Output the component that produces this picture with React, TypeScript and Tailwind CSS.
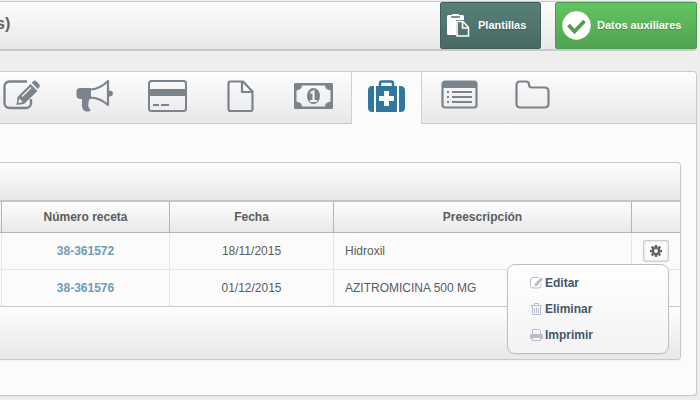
import type { ReactNode } from "react";

type Tab = { label: string; icon: ReactNode; active?: boolean };

const tabs: Tab[] = [
  {
    label: "Notas",
    icon: (
      <>
        <path d="M25 3.500H7.500a5 5 0 0 0-5 5V25a5 5 0 0 0 5 5H24a5 5 0 0 0 5-5v-4" fill="none" stroke="currentColor" strokeWidth="2.400" />
        <path d="M14.500 27l1-8L28.500 6l7 7L22 26z" fill="currentColor" />
        <path d="M29.800 4.700l1.700-1.700q1.500-1 3 .500l2.500 2.500q1.500 1.500.5 3l-1.700 2z" fill="currentColor" />
        <path d="M20 18.500l9-9" stroke="#f6f6f6" strokeWidth="1.200" />
        <path d="M17.300 20.500l3.500 3.500-4 1-.500-.500z" fill="#f6f6f6" />
      </>
    ),
  },
  {
    label: "Avisos",
    icon: (
      <>
        <path d="M16 10H5.500Q1.500 10 1.500 13v4q0 4 4 4H7c.5 3-.5 5 0 7.500.5 3.500 2.500 5 5 5 2 0 3.500-.5 3.500-1.500-3-3-2.500-7-1-11H16z" fill="currentColor" />
        <path d="M16 11.500c6-.5 12-3.500 17-8.500v24c-5-4.500-11-7-17-7.500" fill="none" stroke="currentColor" strokeWidth="2.200" strokeLinejoin="round" />
        <path d="M34 12.500q4 0 4 3t-4 3z" fill="currentColor" />
      </>
    ),
  },
  {
    label: "Pagos",
    icon: (
      <>
        <rect x="1" y="3" width="37" height="30" rx="2.500" fill="none" stroke="currentColor" strokeWidth="2" />
        <path d="M1 11h37v7H1zM5 26h6v2H5zM13 26h8v2h-8z" fill="currentColor" />
      </>
    ),
  },
  {
    label: "Documentos",
    icon: (
      <path d="M9.500 3.500H22l9.500 10V31q0 2-2 2h-20q-2 0-2-2V5.500q0-2 2-2zM21 4v10h10.500" fill="none" stroke="currentColor" strokeWidth="2.200" strokeLinejoin="round" />
    ),
  },
  {
    label: "Facturas",
    icon: (
      <>
        <path fillRule="evenodd" d="M1.500 5h36q1.500 0 1.500 1.500v23q0 1.500-1.500 1.500h-36Q0 31 0 29.500v-23Q0 5 1.500 5zM8 7.500q0 4-5.500 5v11q5.500 1 5.500 5h23q0-4 5.500-5v-11q-5.500-1-5.500-5z" fill="currentColor" />
        <ellipse cx="19.500" cy="18" rx="6.500" ry="8" fill="currentColor" />
        <path d="M16.500 15l3-1.500v9.500m-3.500 0h7" fill="none" stroke="#f2f2f2" strokeWidth="2.200" />
      </>
    ),
  },
  {
    label: "Recetas",
    active: true,
    icon: (
      <>
        <path fillRule="evenodd" d="M9 8h21v26H9zM17 13v5h-5v5h5v5h5v-5h5v-5h-5v-5z" fill="currentColor" />
        <path d="M7 8v26H5.500Q1 34 1 29.500v-17Q1 8 5.500 8zM32 8v26h1.500q4.500 0 4.500-4.500v-17Q38 8 33.500 8z" fill="currentColor" />
        <path d="M13 8.500V5.500q0-2 2-2h9q2 0 2 2v3" fill="none" stroke="currentColor" strokeWidth="2.500" />
      </>
    ),
  },
  {
    label: "Historial",
    icon: (
      <>
        <rect x="2.500" y="3.500" width="34" height="26" rx="2.500" fill="none" stroke="currentColor" strokeWidth="2.200" />
        <path d="M2 4h35v6H2zM7 13h2v2H7zM7 18h2v2H7zM7 23h2v2H7zM12 13h20v2H12zM12 18h20v2H12zM12 23h20v2H12z" fill="currentColor" />
      </>
    ),
  },
  {
    label: "Archivos",
    icon: (
      <path d="M7 3.500h6q3 0 3 3 0 3 3 3h12.500q4 0 4 4v12q0 4-4 4H7.500q-4 0-4-4V7.500q0-4 3.500-4z" fill="none" stroke="currentColor" strokeWidth="2.200" />
    ),
  },
];

const recetas = [
  { numero: "38-361572", fecha: "18/11/2015", texto: "Hidroxil" },
  { numero: "38-361576", fecha: "01/12/2015", texto: "AZITROMICINA 500 MG" },
];

const acciones: { label: string; icon: ReactNode }[] = [
  {
    label: "Editar",
    icon: (
      <>
        <path d="M9 .500H3Q.500.500.500 3v5.500q0 2.500 2.500 2.500h5.500q2.500 0 2.500-2.500V7" fill="none" stroke="currentColor" />
        <path d="M4.500 9.500l.5-3L11 .500l2 2-5.500 6z" fill="currentColor" />
      </>
    ),
  },
  {
    label: "Eliminar",
    icon: (
      <path d="M1 2.500h11M4.500 2.500v-2h4v2M2.500 3v8.500h8V3M4.500 5v5M6.500 5v5M8.500 5v5" fill="none" stroke="currentColor" />
    ),
  },
  {
    label: "Imprimir",
    icon: (
      <>
        <path d="M2.500 6V.500H9L10.500 2v4" fill="none" stroke="currentColor" />
        <path d="M1.500 5h10q1.500 0 1.500 1.500V10H0V6.500Q0 5 1.500 5z" fill="currentColor" />
        <path d="M2.500 8.500h8v3h-8z" fill="#fafafa" stroke="currentColor" />
      </>
    ),
  },
];

const bar = "bg-linear-to-b from-[#fdfdfd] to-[#e8e8e8]";
const head = "border-r border-b border-[#b4b4c0] p-0 text-center font-bold last:border-r-0";
const cell = "border-r border-[#e6e6ea] p-0 last:border-r-0";

function ActionMenu() {
  return (
    <ul className="absolute top-full right-0 z-10 mt-[2px] w-[162px] rounded-lg border border-[#bfbfbf] bg-linear-to-b from-white to-[#f3f3f3] py-[5px] shadow-xs">
      {acciones.map((a) => (
        <li key={a.label}>
          <a href="#" className="flex h-[26px] items-center gap-[2px] pl-[22px] text-xs font-bold text-[#43566a]">
            <svg viewBox="0 0 13 12" className="h-3 w-[13px] text-[#b9bcca]" aria-hidden="true">
              {a.icon}
            </svg>
            {a.label}
          </a>
        </li>
      ))}
    </ul>
  );
}

export default function App() {
  return (
    <div className="min-h-screen overflow-x-hidden bg-[#eeeeee] pt-px font-['Liberation_Sans',Arial,sans-serif] text-xs text-[#5c5c5c]">
      <header className={`mr-[3px] flex h-[50px] justify-between rounded-r border-t border-b-2 border-[#c9c9c9] ${bar}`}>
        <h1 className="-ml-1 pt-[12px] text-base leading-5 font-bold text-[#606060]">s)</h1>
        <div className="flex gap-[14px]">
          <button className="flex w-[101px] items-center gap-2 rounded-xs border border-[#3f6059] bg-linear-to-b from-[#588078] to-[#486a64] pl-[6px] text-[11px] font-bold text-white text-shadow-xs">
            <svg viewBox="0 0 23 23" className="h-[23px] w-[23px] shrink-0" aria-hidden="true">
              <path d="M1.500 1H5V0h7v1h3.500Q17 1 17 2.500V6H9v15H1.500Q0 21 0 19.500v-17Q0 1 1.500 1z" fill="#fff" />
              <path d="M4 3h9" stroke="#50756d" strokeWidth="1.500" />
              <path d="M10 7.500h6l5.500 6V22H10zM15.500 7.500V14h6" fill="#50756d" stroke="#fff" strokeWidth="1.600" />
            </svg>
            Plantillas
          </button>
          <button className="flex w-[142px] items-center gap-[6px] rounded-xs border border-[#4b9b4b] bg-linear-to-b from-[#62c462] to-[#51a351] pl-[6px] text-[11px] font-bold text-white text-shadow-xs">
            <svg viewBox="0 0 29 29" className="h-[29px] w-[29px] shrink-0" aria-hidden="true">
              <circle cx="14.500" cy="14.500" r="14.200" fill="#fff" />
              <path d="M6.500 14l6 6.500L22.500 10" fill="none" stroke="#4e9f4e" strokeWidth="3.800" />
            </svg>
            Datos auxiliares
          </button>
        </div>
      </header>

      <main className="mt-5 mr-[3px] rounded-r border-t border-r border-b border-[#c9c9c9] bg-[#fbfbfb] pb-[35px] shadow-xs">
        <nav className={`flex h-[52px] overflow-x-clip rounded-tr border-b border-[#c9c9c9] ${bar}`}>
          <div className="-ml-[14px] flex gap-[2px]">
            {tabs.map((t) => (
              <a
                key={t.label}
                href="#"
                aria-label={t.label}
                aria-current={t.active ? "page" : undefined}
                className={
                  t.active
                    ? "flex h-[52px] w-[71px] justify-center border-x border-[#d0d0d0] bg-[#fbfbfb] pt-[6px] text-[#31779d]"
                    : "flex h-[51px] w-[71px] justify-center pt-[6px] text-[#7b838c]"
                }
              >
                <svg viewBox="0 0 39 36" className="h-9 w-[39px] shrink-0" aria-hidden="true">
                  {t.icon}
                </svg>
              </a>
            ))}
          </div>
        </nav>

        <section className="mt-[38px] mr-[15px] rounded-r border-t border-r border-b border-[#c9c9c9] shadow-xs">
          <div className={`h-[39px] rounded-tr border-b-2 border-[#c4c4c8] ${bar}`} />
          <table className="w-full table-fixed border-separate border-spacing-0">
            <colgroup>
              <col className="w-[2px]" />
              <col className="w-[168px]" />
              <col className="w-[164px]" />
              <col />
              <col className="w-[48px]" />
            </colgroup>
            <thead>
              <tr className={`h-[31px] ${bar}`}>
                <th className={head} />
                <th className={head}>Número receta</th>
                <th className={head}>Fecha</th>
                <th className={head}>Preescripción</th>
                <th className={head} />
              </tr>
            </thead>
            <tbody>
              {recetas.map((r, i) => (
                <tr key={r.numero} className="h-[37px] *:border-b last:*:border-b-[#c9c9c9]">
                  <td className={cell} />
                  <td className={`${cell} text-center`}>
                    <a href="#" className="font-bold text-[#6f9ab8]">{r.numero}</a>
                  </td>
                  <td className={`${cell} text-center`}>{r.fecha}</td>
                  <td className={cell}>
                    <span className="pl-[11px]">{r.texto}</span>
                  </td>
                  <td className={cell}>
                    {i === 0 && (
                      <div className="relative ml-[11px] w-[26px]">
                        <button
                          aria-label="Acciones"
                          className="flex h-[22px] w-[26px] items-center justify-center rounded-xs border border-[#cccccc] bg-[#fdfdfd] text-[#666666] shadow-[inset_0_0_3px_#ccc]"
                        >
                          <svg viewBox="0 0 12 12" className="h-3 w-3" aria-hidden="true">
                            <circle cx="6" cy="6" r="3.200" fill="none" stroke="currentColor" strokeWidth="2.600" />
                            <path d="M6 0v2M6 10v2M0 6h2M10 6h2M1.700 1.700l1.500 1.500M8.800 8.800l1.500 1.500M1.700 10.300l1.500-1.500M8.800 3.200l1.500-1.500" stroke="currentColor" strokeWidth="2.400" />
                          </svg>
                        </button>
                        <ActionMenu />
                      </div>
                    )}
                  </td>
                </tr>
              ))}
            </tbody>
          </table>
          <div className={`h-[52px] rounded-br ${bar}`} />
        </section>
      </main>
    </div>
  );
}
